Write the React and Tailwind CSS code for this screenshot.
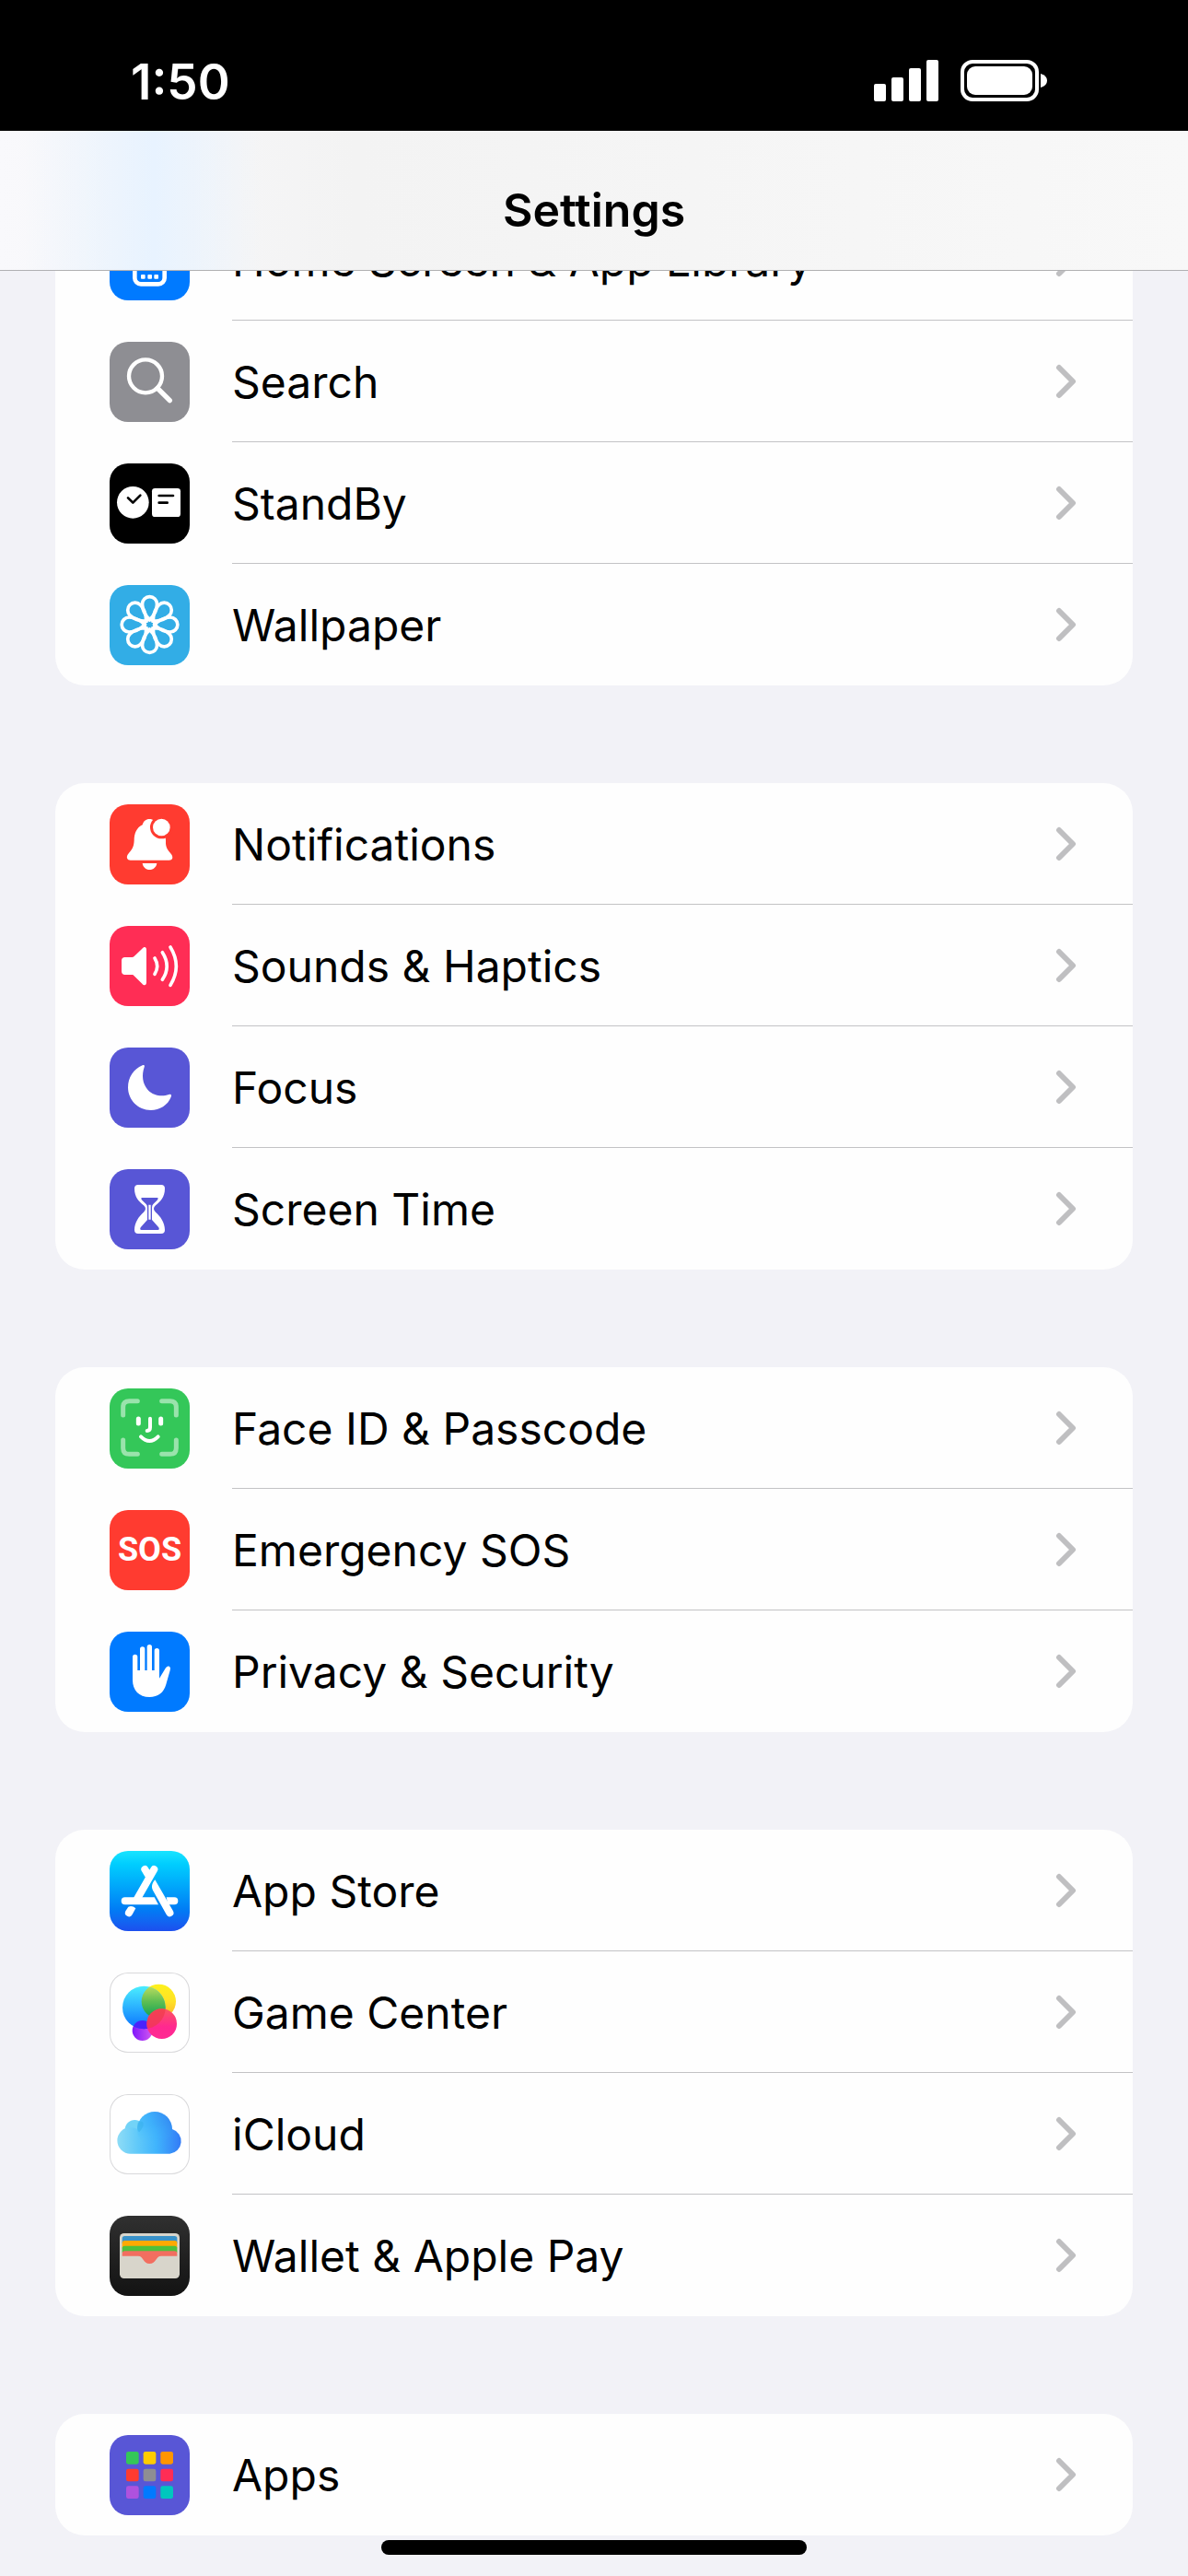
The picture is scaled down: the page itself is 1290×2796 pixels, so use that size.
import React from "react";

const GLYPHS = {
  home: (
    <>
      <rect x="82" y="36" width="97" height="172" rx="20" fill="none" stroke="#fff" strokeWidth="14" />
      <g fill="#fff">
        {[102, 124, 145].map((x) => (
          <rect key={x} x={x} y="177" width="14" height="14" rx="3" />
        ))}
      </g>
    </>
  ),
  search: (
    <g fill="none" stroke="#fff" strokeLinecap="round">
      <circle cx="117" cy="112" r="54" strokeWidth="13" />
      <path d="M156 151L196 191" strokeWidth="16" />
    </g>
  ),
  standby: (
    <>
      <circle cx="76" cy="127" r="52" fill="#fff" />
      <rect x="138" y="81" width="93" height="93" rx="10" fill="#fff" />
      <path d="M60 112L76 128L100 104M161 105H207M161 128H188" fill="none" stroke="#000" strokeWidth="8" strokeLinecap="round" strokeLinejoin="round" />
    </>
  ),
  wallpaper: (
    <g fill="none" stroke="#fff" strokeWidth="11" transform="translate(130.5 129)">
      {[0, 45, 90, 135, 180, 225, 270, 315].map((angle) => (
        <path key={angle} transform={`rotate(${angle})`} d="M0 -16C-16 -32 -24 -50 -24 -67A24 24 0 0 1 24 -67C24 -50 16 -32 0 -16Z" />
      ))}
      <circle r="16" strokeWidth="9" />
    </g>
  ),
  notifications: (
    <>
      <path d="M130 48C118 48 110 55 107 67C88 76 80 95 80 118C79 140 73 148 61 161C52 172 58 182 68 182H194C205 182 209 172 200 161C188 148 182 140 183 118C183 95 172 76 153 67C150 55 142 48 130 48Z" fill="#fff" />
      <path d="M107 192H154C152 205 143 213 130 213C118 213 109 205 107 192Z" fill="#fff" />
      <circle cx="169" cy="75" r="37" fill="#ff3b30" />
      <circle cx="169" cy="75" r="28" fill="#fff" />
    </>
  ),
  sounds: (
    <>
      <path d="M50 102H73C76 102 78 101 80 99L106 74C112 66 120 67 120 77V184C120 194 112 195 106 188L80 163C78 160 76 159 73 159H50C43 159 39 155 39 148V113C39 106 43 102 50 102Z" fill="#fff" />
      <path d="M147 105Q163 131 147 157M172 86Q201 131 172 175M198 69Q236 131 198 193" fill="none" stroke="#fff" strokeWidth="11" strokeLinecap="round" />
    </>
  ),
  focus: (
    <path d="M107 58C113 55 115 58 113 64C104 90 107 118 124 137C143 158 172 161 193 153C200 150 203 154 200 161C190 187 163 204 134 204C93 204 60 171 60 130C60 98 78 70 107 58Z" fill="#fff" />
  ),
  screentime: (
    <>
      <path d="M93 51H168Q180 51 180 63C180 92 165 105 150 118C142 125 142 133 150 140C165 153 180 173 180 198Q180 210 168 210H93Q81 210 81 198C81 173 96 153 111 140C119 133 119 125 111 118C96 105 81 92 81 63Q81 51 93 51Z" fill="#fff" />
      <path d="M107 93H154C160 93 158 98 155 101L142 114Q138 118 138 125V165L160 190Q164 198 157 198H104Q97 198 101 190L123 165V125Q123 118 119 114L106 101C103 98 101 93 107 93Z" fill="#5856d6" />
      <path d="M130.5 116V164" stroke="#fff" strokeWidth="7" />
    </>
  ),
  faceid: (
    <g fill="none" stroke="#fff" strokeLinecap="round">
      <path d="M44 87V61Q44 41 64 41H91M170 41H197Q217 41 217 61V87M217 168V194Q217 214 197 214H170M91 214H64Q44 214 44 194V168" strokeWidth="15" strokeOpacity="0.5" />
      <path d="M94 99V114M167 99V114" strokeWidth="15" />
      <path d="M132 98V127Q132 138 122 138M102 157Q130 185 158 157" strokeWidth="12" />
    </g>
  ),
  privacy: (
    <>
      <path d="M83 82V150M107 57V150M130 50V150M154 62V150" stroke="#fff" strokeWidth="16" strokeLinecap="round" />
      <path d="M75 126H162V152L183 118Q188 110 195 113Q200 117 197 126L184 172C176 200 158 213 130 213C96 213 75 190 75 158Z" fill="#fff" />
    </>
  ),
  appstore: (
    <>
      <path d="M115 60L128 82M145 60L90 156" stroke="#fff" strokeWidth="24" strokeLinecap="round" />
      <path d="M148 94C137 106 136 118 141 128L185 207A12 12 0 0 0 207 196Z" fill="#fff" />
      <path d="M50 151H146L159 175H50A12 12 0 0 1 50 151ZM185 151H211A12 12 0 0 1 211 175H190Z" fill="#fff" />
      <path d="M61 182Q74 177 85 187L74 207A12 12 0 0 1 52 196Z" fill="#fff" />
    </>
  ),
  gamecenter: (
    <>
      <defs>
        <linearGradient id="gcBlue" x2="0" y2="1"><stop stopColor="#4beefe" /><stop offset="1" stopColor="#0a73ff" /></linearGradient>
        <linearGradient id="gcYellow" x2="0" y2="1"><stop stopColor="#fdf11c" /><stop offset="0.5" stopColor="#ffe126" /><stop offset="1" stopColor="#fbb02c" /></linearGradient>
        <linearGradient id="gcGreen" x2="0" y2="1"><stop stopColor="#c8e060" /><stop offset="0.5" stopColor="#5fbe53" /><stop offset="1" stopColor="#0b9f54" /></linearGradient>
        <linearGradient id="gcPink" x2="0" y2="1"><stop stopColor="#fc5660" /><stop offset="0.6" stopColor="#ff2890" /><stop offset="1" stopColor="#ff2a93" /></linearGradient>
        <linearGradient id="gcPurple"><stop stopColor="#7f18fb" /><stop offset="1" stopColor="#d458f0" /></linearGradient>
        <clipPath id="gcBlueClip"><circle cx="112" cy="114" r="70" /></clipPath>
      </defs>
      <circle cx="107" cy="189" r="33" fill="url(#gcPurple)" />
      <circle cx="160" cy="94" r="56" fill="url(#gcYellow)" />
      <circle cx="112" cy="114" r="70" fill="url(#gcBlue)" />
      <g clipPath="url(#gcBlueClip)">
        <circle cx="107" cy="189" r="33" fill="#4b22fa" />
        <circle cx="160" cy="94" r="56" fill="url(#gcGreen)" />
      </g>
      <circle cx="170" cy="167" r="49" fill="url(#gcPink)" />
      <circle cx="170" cy="167" r="49" fill="#ee3a4c" fillOpacity="0.7" clipPath="url(#gcBlueClip)" />
    </>
  ),
  icloud: (
    <>
      <defs>
        <linearGradient id="cloudFill" gradientUnits="userSpaceOnUse" x1="25" y1="150" x2="237" y2="150">
          <stop stopColor="#8edcf6" /><stop offset="0.3" stopColor="#62caf9" /><stop offset="0.6" stopColor="#40b4fd" /><stop offset="1" stopColor="#3278f6" />
        </linearGradient>
        <linearGradient id="cloudTop" x1="0" y1="0.6" x2="1" y2="0.2">
          <stop stopColor="#52c5fb" /><stop offset="0.45" stopColor="#3eb0fb" /><stop offset="1" stopColor="#3389f3" />
        </linearGradient>
        <linearGradient id="cloudFade" x2="0" y2="1"><stop offset="0.4" stopColor="#fff" /><stop offset="0.85" stopColor="#000" /></linearGradient>
        <mask id="cloudMask"><rect x="85" y="57" width="130" height="114" fill="url(#cloudFade)" /></mask>
      </defs>
      <circle cx="82" cy="116" r="32" fill="#72d3f7" />
      <path d="M68 108A43 43 0 0 0 68 194H196A41 41 0 0 0 204 114A57 57 0 0 0 91 114Q80 108 68 108Z" fill="url(#cloudFill)" />
      <circle cx="147" cy="114" r="57" fill="url(#cloudTop)" mask="url(#cloudMask)" />
      <path d="M92 93Q104 84 110 94Q112 108 96 124Q88 116 91 100Z" fill="#2fa9e6" fillOpacity="0.4" />
    </>
  ),
  wallet: (
    <>
      <rect x="33" y="57" width="195" height="147" rx="14" fill="#d8d5cb" />
      <path d="M41 90V74Q41 66 49 66H212Q220 66 220 74V90Z" fill="#3a92c8" />
      <path d="M41 105V89Q41 81 49 81H212Q220 81 220 89V105Z" fill="#fea902" />
      <path d="M41 120V106Q41 98 49 98H212Q220 98 220 106V120Z" fill="#4fc03c" />
      <path d="M41 131V123Q41 115 49 115H212Q220 115 220 123V131H168C150 131 152 156 130 156C109 156 111 131 93 131Z" fill="#f26e60" />
    </>
  ),
  apps: (
    <>
      {["#34c759", "#ffcc00", "#ff9500", "#ff3b30", "#8e8e93", "#ff2d55", "#af52de", "#007aff", "#00c7be"].map((color, i) => (
        <rect key={color} x={54 + (i % 3) * 56} y={54 + Math.floor(i / 3) * 56} width="41" height="41" rx="7" fill={color} />
      ))}
    </>
  ),
};

const groups = [
  [
    { label: "Home Screen & App Library", icon: "home", tile: "bg-[#007aff]" },
    { label: "Search", icon: "search", tile: "bg-[#8e8e93]" },
    { label: "StandBy", icon: "standby", tile: "bg-black" },
    { label: "Wallpaper", icon: "wallpaper", tile: "bg-[#32ade6]" },
  ],
  [
    { label: "Notifications", icon: "notifications", tile: "bg-[#ff3b30]" },
    { label: "Sounds & Haptics", icon: "sounds", tile: "bg-[#ff2d55]" },
    { label: "Focus", icon: "focus", tile: "bg-[#5856d6]" },
    { label: "Screen Time", icon: "screentime", tile: "bg-[#5856d6]" },
  ],
  [
    { label: "Face ID & Passcode", icon: "faceid", tile: "bg-[#34c759]" },
    { label: "Emergency SOS", icon: "sos", tile: "bg-[#ff3b30]" },
    { label: "Privacy & Security", icon: "privacy", tile: "bg-[#007aff]" },
  ],
  [
    { label: "App Store", icon: "appstore", tile: "bg-linear-to-b from-[#18e4ff] to-[#1c4fee]" },
    { label: "Game Center", icon: "gamecenter", tile: "bg-white inset-ring-1 inset-ring-[#d9d9db]" },
    { label: "iCloud", icon: "icloud", tile: "bg-white inset-ring-1 inset-ring-[#d9d9db]" },
    { label: "Wallet & Apple Pay", icon: "wallet", tile: "bg-linear-to-b from-[#303030] to-[#131313]" },
  ],
  [{ label: "Apps", icon: "apps", tile: "bg-[#5856d6]" }],
];

function Tile({ icon, tile }) {
  return (
    <span className={`flex size-[87px] shrink-0 items-center justify-center overflow-hidden rounded-[20px] ${tile}`} aria-hidden="true">
      {icon === "sos" ? (
        <span className="font-['Roboto',sans-serif] text-[36px] leading-none font-bold text-white">SOS</span>
      ) : (
        <svg viewBox="0 0 261 261" className="size-full">{GLYPHS[icon]}</svg>
      )}
    </span>
  );
}

function Row({ label, icon, tile, last }) {
  return (
    <li>
      <button type="button" className="flex h-[132px] w-full items-center gap-[46px] pl-[59px] text-left">
        <Tile icon={icon} tile={tile} />
        <span className={`flex h-full flex-1 items-center justify-between border-b pr-[60px] ${last ? "border-transparent" : "border-[#c3c3c5]"}`}>
          <span className="pt-[3px] text-[48px] leading-[60px]">{label}</span>
          <svg viewBox="0 0 24 40" className="h-10 w-6" fill="none" stroke="#bfbfc1" strokeWidth="6" strokeLinecap="round" strokeLinejoin="round" aria-hidden="true">
            <path d="M4 5L19 20L4 35" />
          </svg>
        </span>
      </button>
    </li>
  );
}

function StatusBar() {
  return (
    <div className="flex h-[142px] items-center justify-between bg-black pt-8 pr-[152px] pl-[142px] text-white">
      <span className="pt-[3px] text-[53px] leading-[60px] font-semibold">1:50</span>
      <div className="flex items-center gap-6">
        <svg viewBox="0 0 70 45" className="h-[45px] w-[70px]" fill="#fff" role="img" aria-label="Signal">
          <rect y="26" width="13" height="19" rx="2" />
          <rect x="19" y="19" width="13" height="26" rx="2" />
          <rect x="38" y="9" width="13" height="36" rx="2" />
          <rect x="57" width="13" height="45" rx="2" />
        </svg>
        <svg viewBox="0 0 95 45" className="h-[45px] w-[95px]" role="img" aria-label="Battery">
          <rect x="2" y="2" width="81" height="41" rx="11" fill="none" stroke="#fff" strokeWidth="4" />
          <rect x="7" y="7" width="71" height="31" rx="9" fill="#fff" />
          <path d="M87 15Q94 17 94 22.500Q94 28 87 30Z" fill="#fff" />
        </svg>
      </div>
    </div>
  );
}

export default function App() {
  return (
    <div className="min-h-screen bg-[#f2f2f7] font-['Inter',sans-serif] text-black">
      <header className="sticky top-0 z-10">
        <StatusBar />
        <div className="flex h-[152px] items-center justify-center border-b border-[#b0b0b2] bg-linear-to-r from-[#f9f9fc] from-0% via-[#f3f3f3] via-30% to-[#f8f8f8]">
          <div className="flex h-full w-full items-center justify-center bg-linear-to-r from-transparent from-2% via-[#e8f3ff] via-13% to-transparent to-22% pt-5">
            <h1 className="text-[50px] leading-[60px] font-semibold">Settings</h1>
          </div>
        </div>
      </header>

      {/* first group is scrolled partly under the header */}
      <main className="-mt-[78px] flex flex-col gap-[106px] px-[60px]">
        {groups.map((rows) => (
          <ul key={rows[0].label} className="overflow-hidden rounded-[32px] bg-[#fefefe]">
            {rows.map((row, i) => (
              <Row key={row.label} {...row} last={i === rows.length - 1} />
            ))}
          </ul>
        ))}
      </main>

      <footer className="flex justify-center pt-[5px] pb-[23px]">
        <div className="h-4 w-[462px] rounded-full bg-black" />
      </footer>
    </div>
  );
}
